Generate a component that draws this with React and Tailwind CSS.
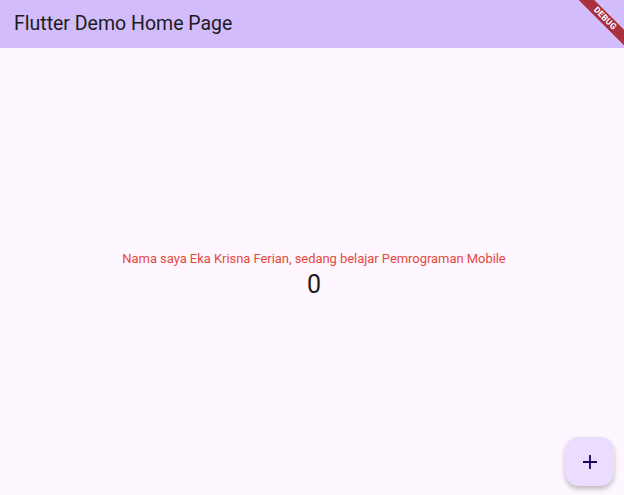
import React from "react";

export default function App() {
  return (
    <div
      className="relative flex h-[495px] w-[624px] flex-col overflow-hidden bg-[#fef7ff]"
      style={{ fontFamily: "Roboto, 'Noto Sans', sans-serif" }}
    >
      <header className="flex h-[48px] shrink-0 items-center bg-[#d2bcfb] pl-[14px]">
        <h1 className="text-[19.5px] leading-none text-[#1d1b20]">Flutter Demo Home Page</h1>
      </header>
      <main className="flex flex-1 flex-col items-center justify-center pl-[4px] pt-[6px]">
        <p className="text-[13px] leading-[20px] tracking-[-0.05px] text-[#e44a3e]">
          Nama saya Eka Krisna Ferian, sedang belajar Pemrograman Mobile
        </p>
        <p className="text-[25px] leading-[32px] text-[#1d1b20]">0</p>
      </main>
      <button className="absolute bottom-[9px] right-[10px] flex h-[49px] w-[49px] items-center justify-center rounded-[14px] bg-[#eaddff] shadow-[0_3px_5px_rgba(0,0,0,0.25)]">
        <svg width="16" height="16" viewBox="0 0 16 16">
          <path d="M8 1v14M1 8h14" stroke="#21005d" strokeWidth="1.8" />
        </svg>
      </button>
      <div className="pointer-events-none absolute right-[-26px] top-[13px] flex h-[11px] w-[90px] rotate-45 items-center justify-center bg-[#a8303d]">
        <span className="text-[8.5px] font-bold leading-none tracking-[0.2px] text-white">DEBUG</span>
      </div>
    </div>
  );
}
